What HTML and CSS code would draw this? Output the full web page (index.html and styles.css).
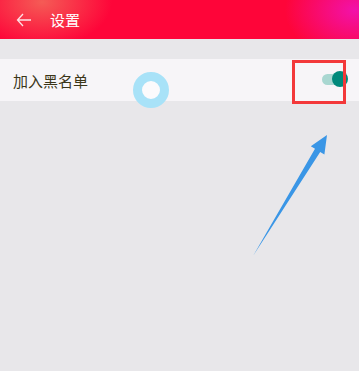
FILE: index.html
```html
<!DOCTYPE html>
<html lang="zh">
<head>
<meta charset="utf-8">
<link rel="stylesheet" href="styles.css">
</head>
<body>
<div class="page">
  <header class="topbar">
    <svg class="back" width="16" height="14" viewBox="0 0 16 14"><path d="M7 1 L1.5 7 L7 13 M1.5 7 H15" fill="none" stroke="#fff" stroke-width="1.3" opacity="0.85"/></svg>
    <span class="title">设置</span>
  </header>
  <div class="row">
    <span class="label">加入黑名单</span>
    <div class="toggle"><span class="track"></span><span class="thumb"></span></div>
  </div>
  <div class="ring"></div>
  <div class="highlight"></div>
  <svg class="arrow" width="359" height="371" viewBox="0 0 359 371"><polygon points="253,256 315,148.8 310.8,146.2 327,135 324.4,154.6 320.2,152" fill="#3a96e6"/></svg>
</div>
</body>
</html>
```
FILE: styles.css
```css
html, body { margin: 0; padding: 0; }
body { background: #e8e7ea; font-family: "Noto Sans CJK SC", "Noto Sans", sans-serif; }
.page { position: relative; width: 359px; height: 371px; overflow: hidden; }
.topbar {
  height: 39px;
  display: flex;
  align-items: center;
  padding-left: 16px;
  background:
    radial-gradient(ellipse 70px 45px at 42px 2px, rgba(242,120,95,0.75), rgba(242,120,95,0) 100%),
    radial-gradient(ellipse 70px 50px at 355px 10px, rgba(240,20,190,0.85), rgba(240,20,190,0) 100%),
    #fe0539;
  color: #fff;
}
.back { display: block; margin-right: 18px; }
.title { font-size: 15px; line-height: 1; }
.row {
  margin-top: 20px;
  height: 42px;
  background: #f7f5f8;
  display: flex;
  align-items: center;
  justify-content: space-between;
  padding-left: 13px;
  padding-right: 11px;
}
.label { font-size: 15px; color: #3b3518; }
.toggle { position: relative; width: 26px; height: 16px; }
.track { position: absolute; left: 0; top: 2px; width: 22px; height: 11px; border-radius: 6px; background: #a9d7d1; }
.thumb { position: absolute; right: 0; top: -1px; width: 16px; height: 16px; border-radius: 50%; background: #00897b; }
.ring {
  position: absolute; left: 133px; top: 72px;
  width: 18px; height: 18px;
  border: 9px solid #a8e2f8;
  border-radius: 50%;
  background: #fbfafc;
}
.highlight {
  position: absolute; left: 292px; top: 60px;
  width: 48px; height: 38px;
  border: 3px solid #f3383a;
}
.arrow { position: absolute; left: 0; top: 0; }
```
